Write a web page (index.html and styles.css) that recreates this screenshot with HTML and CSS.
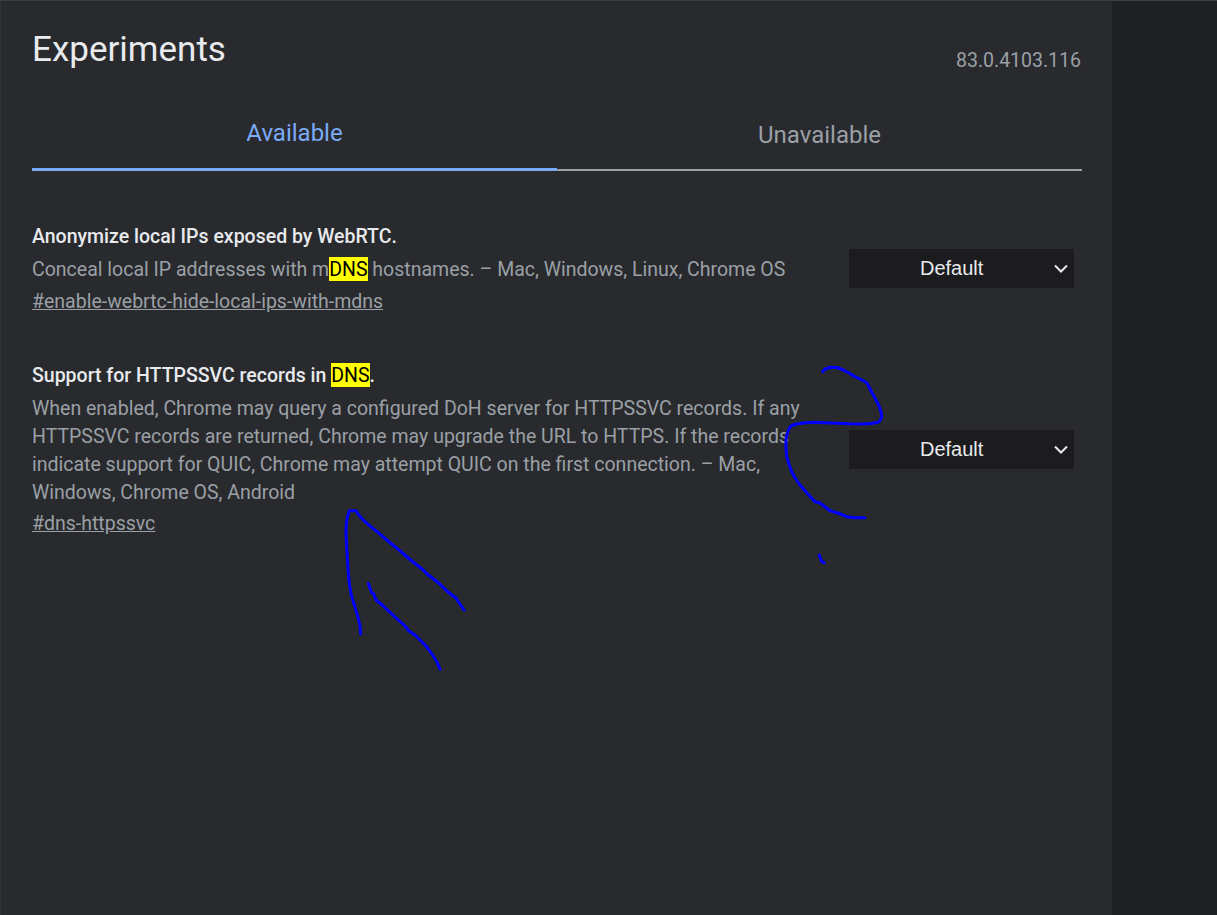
FILE: index.html
```html
<!DOCTYPE html>
<html lang="en">
<head>
<meta charset="utf-8">
<title>Experiments</title>
<link rel="stylesheet" href="styles.css">
</head>
<body>
<div class="page">
  <main class="panel">
    <header class="head">
      <h1 class="title">Experiments</h1>
      <span class="version">83.0.4103.116</span>
    </header>
    <nav class="tabs">
      <div class="tab tab-on">Available</div>
      <div class="tab tab-off">Unavailable</div>
    </nav>
    <section class="row row-one">
      <div class="info">
        <h2 class="name">Anonymize local IPs exposed by WebRTC.</h2>
        <p class="desc">Conceal local IP addresses with m<mark class="hit">DNS</mark> hostnames. – Mac, Windows, Linux, Chrome OS</p>
        <a class="link" href="#enable-webrtc-hide-local-ips-with-mdns">#enable-webrtc-hide-local-ips-with-mdns</a>
      </div>
      <div class="select">
        <span class="select-text">Default</span>
        <svg class="chev" width="14" height="9" viewBox="0 0 14 9"><path d="M1 1.5 L7 7.5 L13 1.5" fill="none" stroke="#e8eaed" stroke-width="2"/></svg>
      </div>
    </section>
    <section class="row row-two">
      <div class="info">
        <h2 class="name">Support for HTTPSSVC records in <mark class="hit">DNS</mark>.</h2>
        <p class="desc">When enabled, Chrome may query a configured DoH server for HTTPSSVC records. If any HTTPSSVC records are returned, Chrome may upgrade the URL to HTTPS. If the records indicate support for QUIC, Chrome may attempt QUIC on the first connection. – Mac, Windows, Chrome OS, Android</p>
        <a class="link" href="#dns-httpssvc">#dns-httpssvc</a>
      </div>
      <div class="select">
        <span class="select-text">Default</span>
        <svg class="chev" width="14" height="9" viewBox="0 0 14 9"><path d="M1 1.5 L7 7.5 L13 1.5" fill="none" stroke="#e8eaed" stroke-width="2"/></svg>
      </div>
    </section>
  </main>
  <aside class="side"></aside>
</div>
<svg class="ink" width="1217" height="915" viewBox="0 0 1217 915">
  <path d="M822.7 371.7 L825 369 L830 367.3 L837 367.5 L843.3 370 L849 373 L855 376.7 L862 380 L867.3 383.3 L870 389 L873.3 395 L876.5 401 L879.3 406.7 L881 412 L881.7 416.7 L880.5 420 L878.3 422.3 L871 423.5 L863.3 424 L850 423.8 L836.7 423.3 L825 422.7 L813.3 422.3 L803 423 L795 424.3 L791 426 L789.3 428.3 L787 434 L786 440 L786 448 L786.7 456.7 L789 464 L791.7 471.7 L795.5 478.5 L800 485 L807 493 L815 501.7 L820 503 L830 510.7 L838 513 L846.7 516.7 L855 517.7 L865 517.7"/>
  <path d="M819.3 555 L821.7 561.7 L824.3 562.7"/>
  <path d="M360.7 634 L360 626 L358.3 618.3 L355 607 L351.7 596.7 L349.5 585 L348.3 573.3 L347 553 L346 533.3 L346.2 526 L346.7 520 L348 515 L349.3 510.7 L356 510.7 L358 514 L363.3 520 L370 526 L378.3 532.7 L388 541 L398.3 549.3 L410 559.5 L423.3 570 L426 573 L438.3 582.7 L448 592 L456 598 L458.3 601.7 L464 610"/>
  <path d="M368.3 583.3 L371.7 592.7 L373.5 593.5 L376 600 L383.3 606 L394 616 L405 626 L409 631 L415 635 L425 645 L429 650 L433.3 656 L437 662 L440 669.3"/>
</svg>
</body>
</html>
```
FILE: styles.css
```css
* {
  box-sizing: border-box;
}

html,
body {
  margin: 0;
  height: 100%;
  overflow: hidden;
}

body {
  background: #202124;
  font-family: Roboto, "Liberation Sans", sans-serif;
  color: #9aa0a6;
}

.page {
  display: flex;
  height: 915px;
  border-top: 1px solid #3c3d40;
}

.panel {
  width: 1112px;
  padding: 0 31px 0 32px;
  background: #292a2d;
  box-shadow: inset 1px 0 0 #333437;
}

.side {
  flex: 1;
  background: #202124;
}

.head {
  display: flex;
  justify-content: space-between;
  align-items: flex-end;
  height: 69px;
}

.title {
  margin: 0;
  padding-top: 26px;
  font-size: 35px;
  line-height: 40px;
  font-weight: 400;
  color: #e8eaed;
}

.version {
  font-size: 19.5px;
  line-height: 24px;
  margin-bottom: -3px;
  color: #9aa0a6;
}

.tabs {
  display: flex;
  width: 1050px;
}

.tab {
  flex: 1;
  height: 101px;
  display: flex;
  align-items: flex-end;
  justify-content: center;
  font-size: 24px;
  line-height: 28px;
}

.tab-on {
  padding-bottom: 21px;
  color: #7baaf7;
  border-bottom: 3px solid #7baaf7;
}

.tab-off {
  padding-bottom: 20px;
  color: #9aa0a6;
  border-bottom: 2px solid #9aa0a6;
}

.row {
  display: flex;
  align-items: center;
  justify-content: space-between;
  width: 1042px;
}

.row-one {
  margin-top: 50px;
}

.row-one .info {
  padding-top: 2px;
}

.row-two {
  margin-top: 46px;
}

.row-two .link {
  margin-top: 3px;
}

.row-two .select {
  margin-bottom: 1px;
}

.info {
  width: 774px;
}

.name {
  margin: 0;
  font-size: 19.5px;
  line-height: 28px;
  font-weight: 500;
  color: #e8eaed;
}

.desc {
  margin: 5px 0 0;
  font-size: 19.5px;
  line-height: 28px;
}

.link {
  display: block;
  margin-top: 4px;
  font-size: 19.5px;
  line-height: 28px;
  color: #9aa0a6;
}

.hit {
  padding: 1px 0 0;
  background: #ffff00;
  color: #000;
  font-weight: 400;
}

.select {
  display: flex;
  align-items: center;
  width: 225px;
  height: 39px;
  padding: 0 6px 0 71px;
  background: #1c1c1e;
}

.select-text {
  flex: 1;
  font-family: "Liberation Sans", Arial, sans-serif;
  font-size: 20px;
  color: #e8eaed;
}

.chev {
  display: block;
}

.ink {
  position: absolute;
  top: 0;
  left: 0;
  pointer-events: none;
}

.ink path {
  fill: none;
  stroke: #0000ff;
  stroke-width: 3;
  stroke-linecap: round;
  stroke-linejoin: round;
}
```
